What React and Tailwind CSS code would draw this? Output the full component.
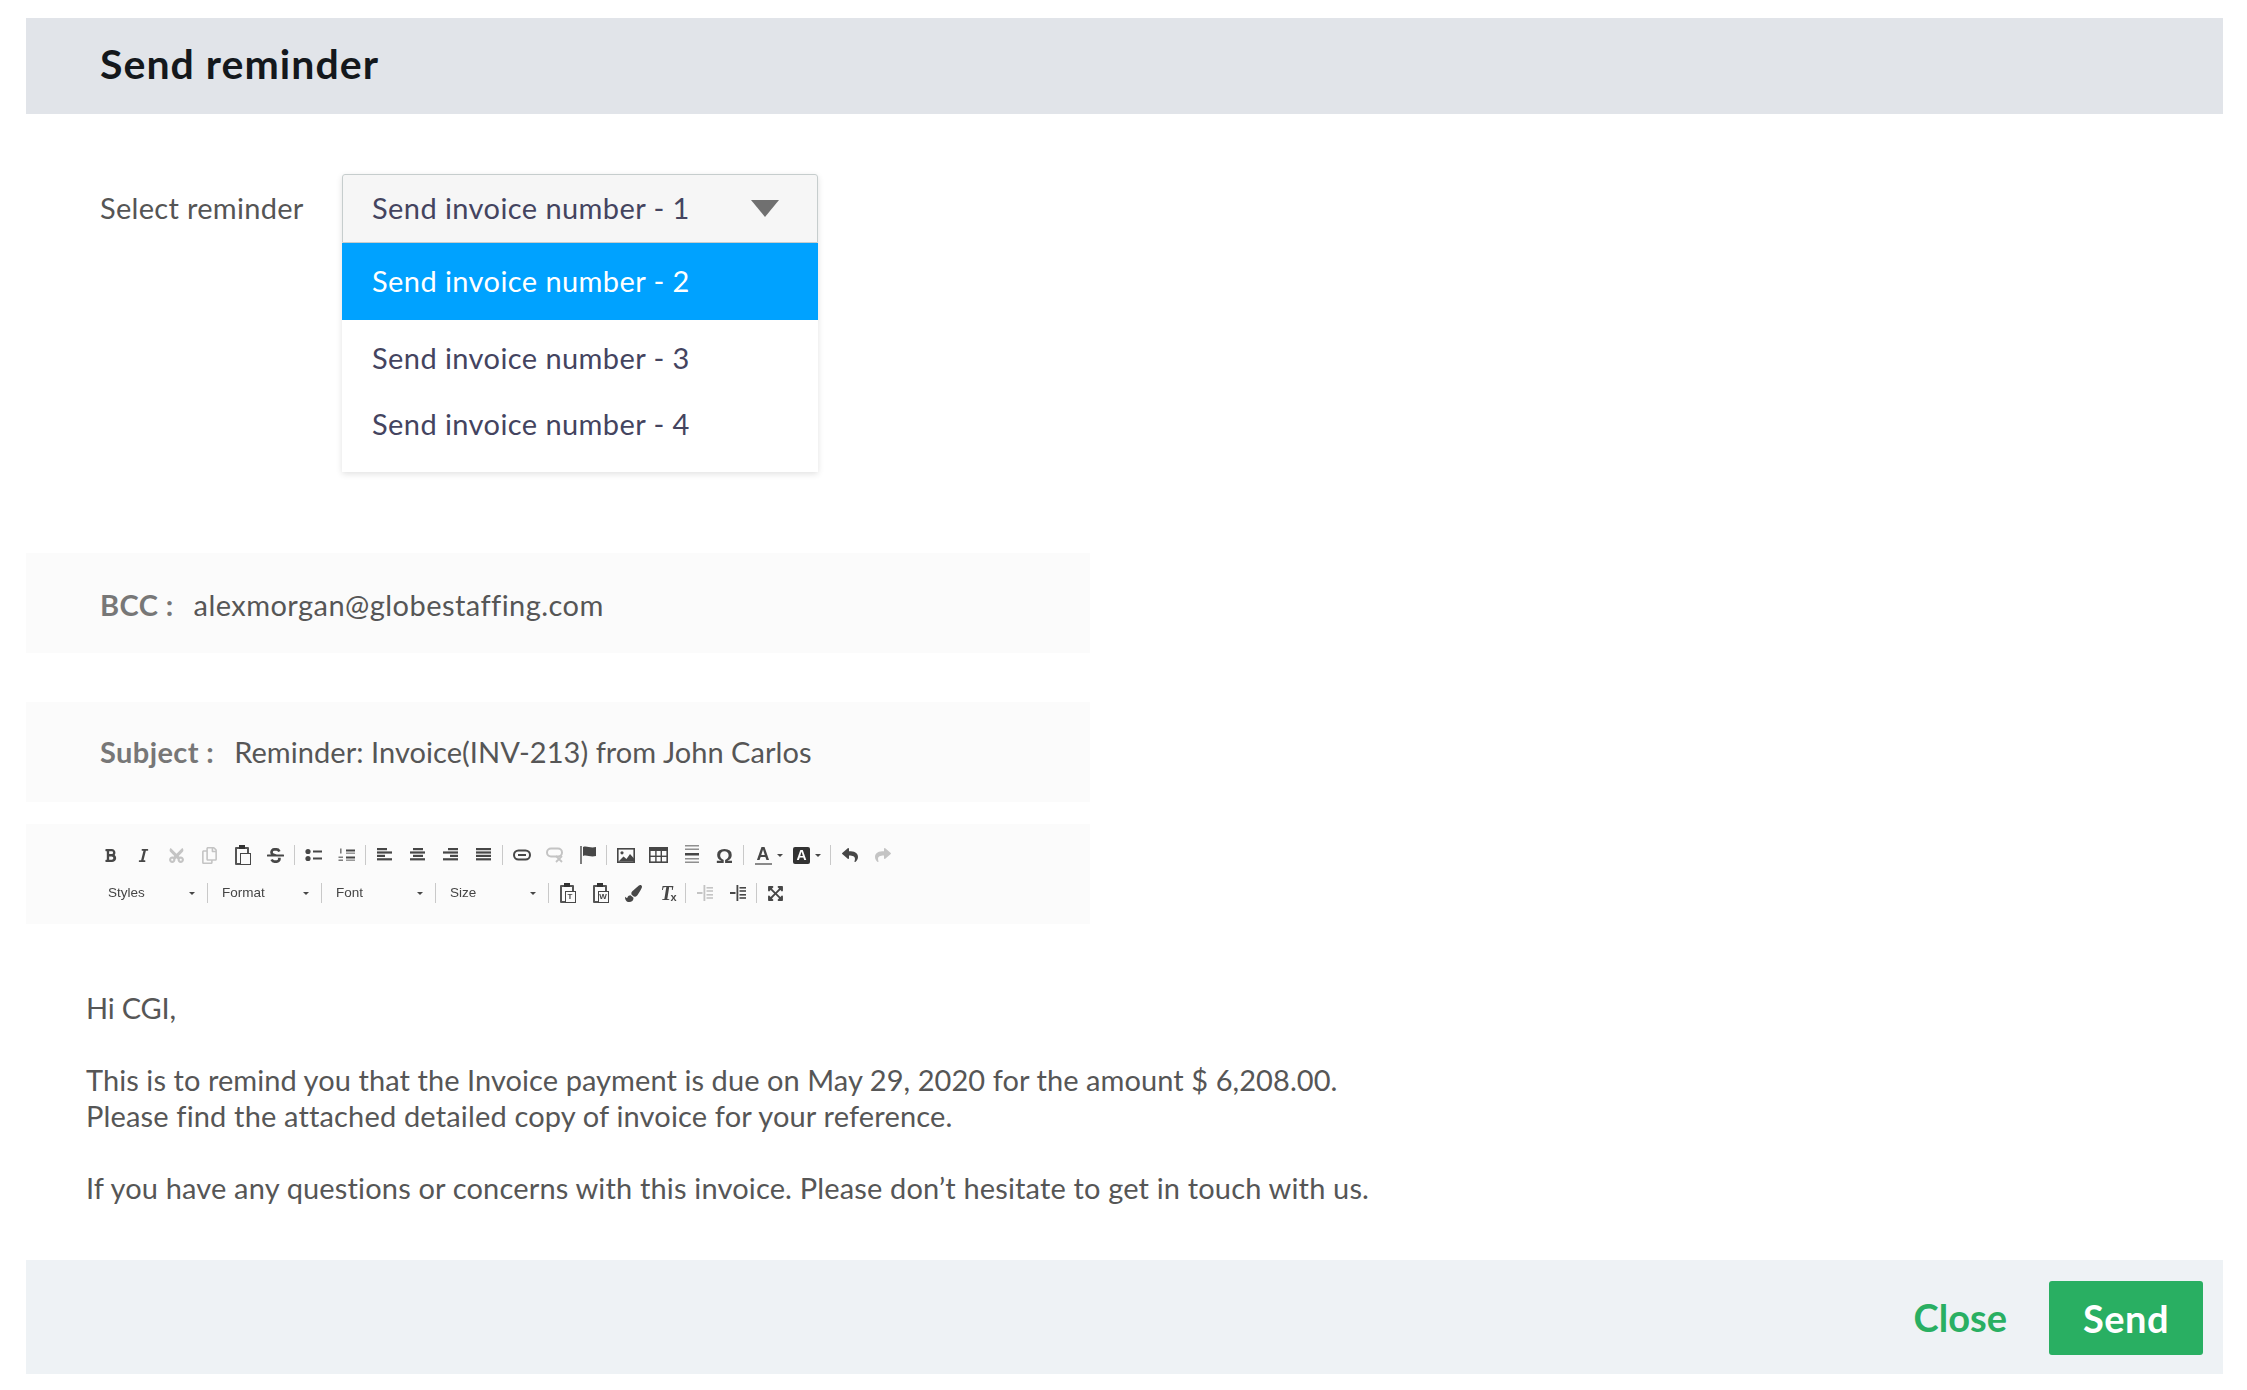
import {
  FaBold, FaItalic, FaCut, FaRegCopy, FaStrikethrough, FaReply, FaShare, FaPaintBrush, FaExpandArrowsAlt,
} from 'react-icons/fa'

const Sep = () => <div className="w-px h-[20px] mx-[2px] bg-[#c9c9c9] shrink-0" />

const Btn = ({ children, off }) => (
  <div className={`w-[33px] h-[24px] flex items-center justify-center text-[#474747] text-[14px] shrink-0 ${off ? 'opacity-30' : ''}`}>
    {children}
  </div>
)

const Caret = () => <div className="w-0 h-0 border-x-[3px] border-x-transparent border-t-[3px] border-t-[#474747]" />

const Combo = ({ label, width }) => (
  <div className={`${width} h-[24px] pl-[12px] pr-[10px] flex items-center justify-between shrink-0 text-[13.5px] text-[#454545] font-['Liberation_Sans',sans-serif]`}>
    <span>{label}</span>
    <Caret />
  </div>
)

// small helper for the toolbar drawings, all on the same grid
const Ico = ({ w = 18, h = 18, children }) => (
  <svg width={w} height={h} viewBox={`0 0 ${w} ${h}`} fill="currentColor">{children}</svg>
)

const Bars = ({ rows }) => (
  <Ico w={16} h={16}>
    {rows.map(([x, width], i) => <rect key={i} x={x} y={1 + i * 3.4} width={width} height={2.2} />)}
  </Ico>
)

const BulletIcon = () => (
  <Ico w={17} h={14}>
    <circle cx="3" cy="3.5" r="2.6" />
    <circle cx="3" cy="10.5" r="2.6" />
    <rect x="8" y="2.5" width="9" height="2" />
    <rect x="8" y="9.5" width="9" height="2" />
  </Ico>
)

const NumberIcon = () => (
  <Ico w={17} h={14}>
    <rect x="2" y="0.5" width="1.6" height="5" opacity="0.7" />
    <rect x="0.5" y="8.5" width="4.5" height="1.5" opacity="0.7" />
    <rect x="0.5" y="11.5" width="4.5" height="1.5" opacity="0.7" />
    <rect x="8" y="1.5" width="9" height="2" />
    <rect x="8" y="4.5" width="9" height="1.4" opacity="0.6" />
    <rect x="8" y="8.5" width="9" height="2" />
    <rect x="8" y="11.5" width="9" height="1.4" opacity="0.6" />
  </Ico>
)

const LinkIcon = () => (
  <Ico w={18} h={12}>
    <rect x="1" y="1.5" width="16" height="9" rx="4.5" fill="none" stroke="currentColor" strokeWidth="2" />
    <rect x="5" y="5" width="8" height="2" />
  </Ico>
)

const UnlinkIcon = () => (
  <Ico w={18} h={16}>
    <rect x="1" y="1.5" width="15" height="8" rx="4" fill="none" stroke="currentColor" strokeWidth="2" />
    <path d="M10 9l6 6M16 9l-6 6" stroke="currentColor" strokeWidth="1.8" />
  </Ico>
)

const FlagIcon = () => (
  <Ico w={18} h={20}>
    <rect x="1" y="1" width="2" height="18" opacity="0.7" />
    <path d="M4 2c4-1.5 7 1.5 13 0v9c-6 1.5-9-1.5-13 0z" />
  </Ico>
)

const ImageIcon = () => (
  <Ico w={18} h={15}>
    <rect x="0.8" y="0.8" width="16.4" height="13.4" fill="none" stroke="currentColor" strokeWidth="1.6" />
    <circle cx="5" cy="4.8" r="1.6" />
    <path d="M1.5 13.5l5-5 3 2.5 3.5-5 4 4.5v3z" />
  </Ico>
)

const TableIcon = () => (
  <Ico w={19} h={16}>
    <rect x="0.8" y="0.8" width="17.4" height="14.4" fill="none" stroke="currentColor" strokeWidth="1.6" />
    <rect x="1" y="1" width="17" height="3" />
    <rect x="6.2" y="1" width="1.4" height="14" />
    <rect x="11.6" y="1" width="1.4" height="14" />
    <rect x="1" y="8.6" width="17" height="1.4" />
  </Ico>
)

const HrIcon = () => (
  <Ico w={16} h={20}>
    <rect x="1" y="0" width="14" height="1.5" opacity="0.6" />
    <rect x="1" y="3.5" width="14" height="1.5" opacity="0.6" />
    <rect x="1" y="8" width="14" height="2.5" />
    <rect x="1" y="13" width="14" height="1.5" opacity="0.6" />
    <rect x="1" y="16.5" width="14" height="1.5" opacity="0.6" />
  </Ico>
)

const PasteIcon = ({ letter }) => (
  <div className="relative w-[16px] h-[20px]">
    <div className="absolute left-0 top-[2px] w-[14px] h-[18px] border-2 border-[#555] rounded-[1px]" />
    <div className="absolute left-[4px] top-0 w-[6px] h-[4px] bg-[#333]" />
    <div className="absolute right-0 bottom-0 w-[11px] h-[12px] bg-[#fbfbfb] border border-[#474747] text-[8px] leading-[10px] text-center font-bold font-['Liberation_Sans',sans-serif]">{letter}</div>
  </div>
)

const IndentIcon = () => (
  <Ico w={16} h={16}>
    <rect x="6.5" y="0" width="1.8" height="16" />
    <rect x="0" y="7" width="5.5" height="2" />
    <rect x="9.5" y="2" width="6.5" height="1.6" />
    <rect x="9.5" y="5.2" width="6.5" height="1.6" />
    <rect x="9.5" y="9" width="6.5" height="1.6" />
    <rect x="9.5" y="12.2" width="6.5" height="1.6" />
  </Ico>
)

const ColorA = () => (
  <div className="w-[41px] h-[24px] flex items-center shrink-0 pl-[8px] gap-[5px] text-[#474747]">
    <div className="flex flex-col items-center w-[18px]">
      <span className="text-[18px] leading-[17px] font-bold font-['Liberation_Sans',sans-serif]">A</span>
      <div className="w-[17px] h-[2px] bg-[#8a8a8a]" />
    </div>
    <Caret />
  </div>
)

const BgA = () => (
  <div className="w-[41px] h-[24px] flex items-center shrink-0 pl-[6px] gap-[5px]">
    <div className="w-[17px] h-[17px] rounded-[2px] bg-[#333] text-white text-[14px] leading-[17px] text-center font-bold font-['Liberation_Sans',sans-serif]">A</div>
    <Caret />
  </div>
)

const Toolbar = () => (
  <div className="mt-[22px] w-[1064px] h-[100px] bg-[#fbfbfb] pl-[68px] pt-[19px] blur-[0.5px]">
    <div className="flex items-center h-[24px] mb-[14px]">
      <Btn><FaBold className="text-[15px]" /></Btn>
      <Btn><FaItalic className="text-[15px]" /></Btn>
      <Btn off><FaCut className="text-[17px] -rotate-90" /></Btn>
      <Btn off><FaRegCopy className="text-[17px]" /></Btn>
      <Btn><PasteIcon /></Btn>
      <Btn><FaStrikethrough className="text-[17px]" /></Btn>
      <Sep />
      <Btn><BulletIcon /></Btn>
      <Btn><NumberIcon /></Btn>
      <Sep />
      <Btn><Bars rows={[[0, 10], [0, 15], [0, 8], [0, 15]]} /></Btn>
      <Btn><Bars rows={[[3, 10], [0, 15], [3, 10], [0, 15]]} /></Btn>
      <Btn><Bars rows={[[5, 10], [0, 15], [7, 8], [0, 15]]} /></Btn>
      <Btn><Bars rows={[[0, 15], [0, 15], [0, 15], [0, 15]]} /></Btn>
      <Sep />
      <Btn><LinkIcon /></Btn>
      <Btn off><UnlinkIcon /></Btn>
      <Btn><FlagIcon /></Btn>
      <Sep />
      <Btn><ImageIcon /></Btn>
      <Btn><TableIcon /></Btn>
      <Btn><HrIcon /></Btn>
      <Btn><span className="text-[21px] leading-none font-bold font-['Liberation_Sans',sans-serif]">Ω</span></Btn>
      <Sep />
      <ColorA />
      <BgA />
      <Sep />
      <Btn><FaReply className="text-[16px]" /></Btn>
      <Btn off><FaShare className="text-[16px]" /></Btn>
    </div>
    <div className="flex items-center h-[24px] pl-[2px]">
      <Combo label="Styles" width="w-[109px]" />
      <Sep />
      <Combo label="Format" width="w-[109px]" />
      <Sep />
      <Combo label="Font" width="w-[109px]" />
      <Sep />
      <Combo label="Size" width="w-[108px]" />
      <Sep />
      <Btn><PasteIcon letter="T" /></Btn>
      <Btn><PasteIcon letter="W" /></Btn>
      <Btn><FaPaintBrush className="text-[17px]" /></Btn>
      <Btn>
        <span className="relative text-[20px] leading-none font-bold italic font-['Liberation_Serif',serif]">
          T<span className="absolute left-[10px] top-[9px] text-[11px] not-italic font-['Liberation_Sans',sans-serif]">x</span>
        </span>
      </Btn>
      <Sep />
      <Btn off><IndentIcon /></Btn>
      <Btn><IndentIcon /></Btn>
      <Sep />
      <Btn><FaExpandArrowsAlt className="text-[17px]" /></Btn>
    </div>
  </div>
)

const InfoRow = ({ label, value, className, valueClass }) => (
  <div className={`w-[1064px] h-[100px] bg-[#fbfbfb] pl-[74px] flex items-center text-[29px] ${className}`}>
    <span className="font-bold text-[#777777] mr-[20px] tracking-[0.4px]">{label}</span>
    <span className={`text-[#565656] ${valueClass}`}>{value}</span>
  </div>
)

const App = () => {
  return (
    <div className="w-[2247px] h-[1390px] bg-white pt-[18px] pl-[26px] font-['Lato',sans-serif] overflow-hidden">
      <div className="w-[2197px] h-[96px] bg-[#e1e4e9] pl-[74px] pb-[5px] flex items-center">
        <h1 className="text-[41px] font-bold text-[#14181c] tracking-[1.03px]">Send reminder</h1>
      </div>

      <div className="flex mt-[60px] pl-[74px]">
        <div className="w-[242px] h-[67px] flex items-center text-[29px] tracking-[0.3px] text-[#555555]">Select reminder</div>
        <div className="w-[476px] h-[298px] bg-white shadow-[0_2px_6px_rgba(0,0,0,0.12)] text-[29px] tracking-[0.42px] text-[#44445f] rounded-t-[3px]">
          <div className="h-[69px] pl-[29px] pr-[38px] pb-[2px] flex items-center justify-between bg-[#f6f6f6] border border-[#c6cdcd] rounded-t-[3px]">
            <span>Send invoice number - 1</span>
            <div className="w-0 h-0 mt-[2px] border-x-[14px] border-x-transparent border-t-[17px] border-t-[#707070]" />
          </div>
          <div className="h-[77px] pl-[30px] pb-[1px] flex items-center bg-[#00a2ff] text-white">Send invoice number - 2</div>
          <div className="h-[76px] pl-[30px] pb-[1px] flex items-center">Send invoice number - 3</div>
          <div className="h-[56px] pl-[30px] pb-[1px] flex items-center">Send invoice number - 4</div>
        </div>
      </div>

      <InfoRow className="mt-[81px] pt-[3px]" valueClass="tracking-[0.45px]" label="BCC :" value="alexmorgan@globestaffing.com" />
      <InfoRow className="mt-[49px] pb-[1px]" valueClass="tracking-[0.05px]" label="Subject :" value="Reminder: Invoice(INV-213) from John Carlos" />
      <Toolbar />

      <div className="pl-[60px] pt-[66px] text-[29px] leading-[36px] tracking-[0.16px] text-[#565656]">
        <p className="tracking-[-0.2px]">Hi CGI,</p>
        <p className="mt-[36px] tracking-[0.07px]">This is to remind you that the Invoice payment is due on May 29, 2020 for the amount $ 6,208.00.</p>
        <p>Please find the attached detailed copy of invoice for your reference.</p>
        <p className="mt-[36px]">If you have any questions or concerns with this invoice. Please don’t hesitate to get in touch with us.</p>
      </div>

      <div className="mt-[54px] w-[2197px] h-[114px] bg-[#eef2f5] flex items-center justify-end pr-[20px]">
        <button className="text-[38px] font-bold text-[#29af62] mr-[42px]">Close</button>
        <button className="w-[154px] h-[74px] mt-[2px] rounded-[3px] bg-[#29af62] text-white text-[38px] font-bold tracking-[0.5px]">Send</button>
      </div>
    </div>
  )
}

export default App
